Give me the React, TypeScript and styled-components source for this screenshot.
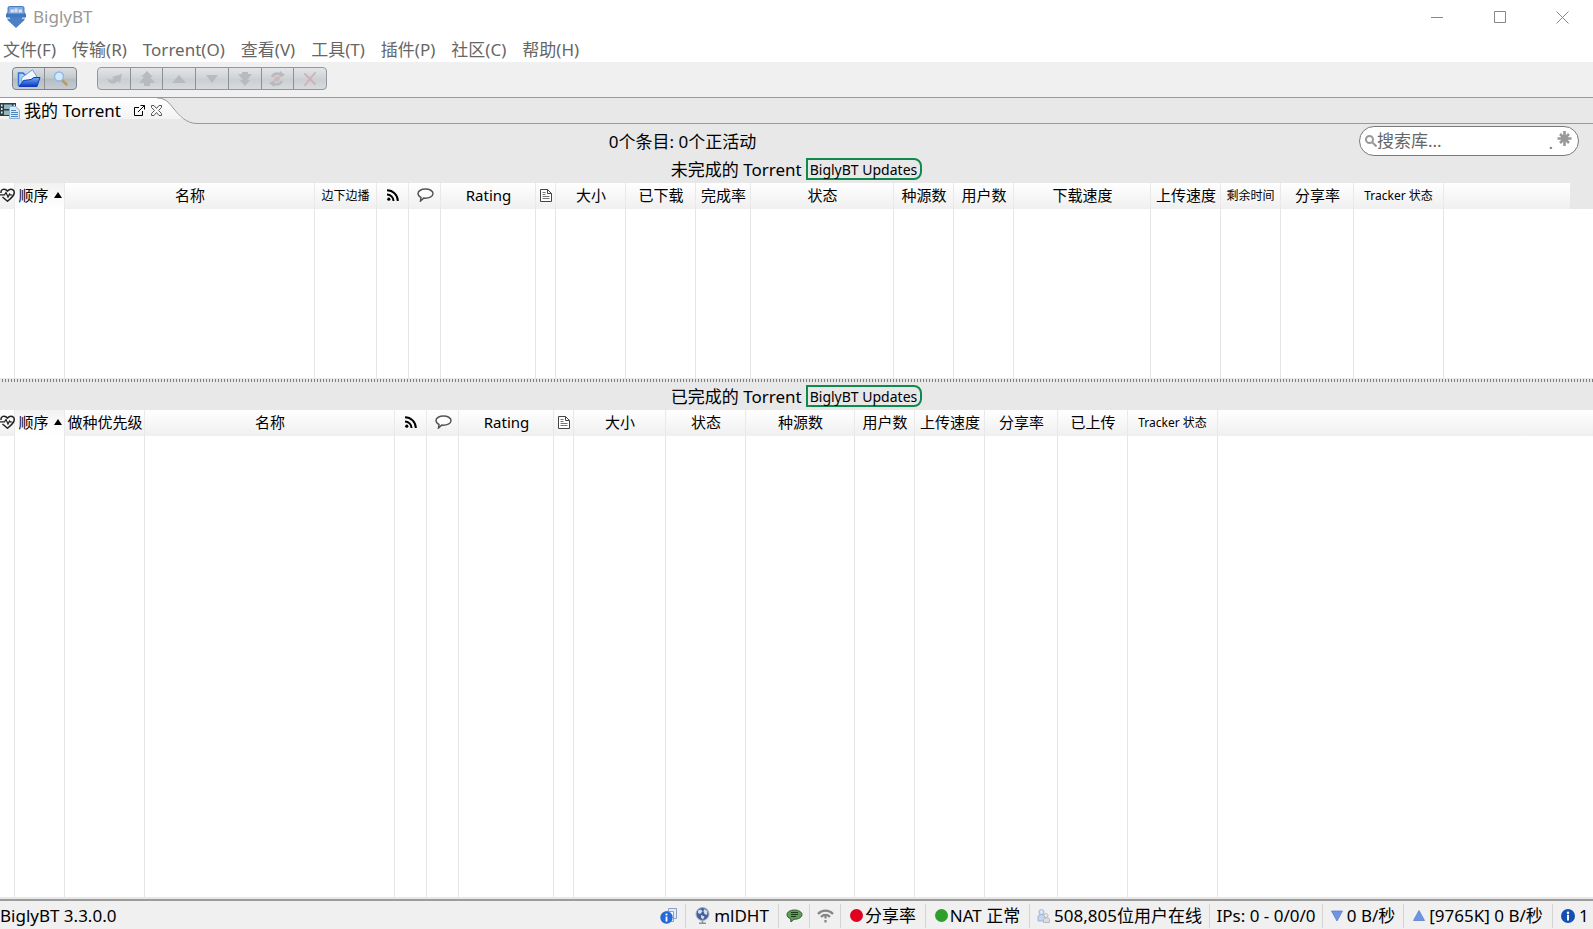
import React from "react";
import styled, { createGlobalStyle, css } from "styled-components";

const GlobalStyle = createGlobalStyle`
  *, *::before, *::after { box-sizing: border-box; }
  body {
    margin: 0;
    background: #fff;
    color: #000;
    font-family: "Noto Sans", "Noto Sans CJK SC", sans-serif;
    font-size: 17px;
    line-height: 24px;
  }
  button, input { font: inherit; color: inherit; }
  svg { display: block; flex: none; }
`;

const Window = styled.div`
  display: flex;
  flex-direction: column;
  min-height: 100vh;
  min-width: 0;
  overflow: hidden;
`;

/* ---------- title bar ---------- */

const TitleBar = styled.header`
  display: flex;
  align-items: center;
  height: 34px;
  padding-left: 6px;
  gap: 7px;
  color: #999;
`;

const AppName = styled.h1`
  flex: 1;
  margin: 0;
  font-size: 17px;
  font-weight: 400;
`;

const WindowButtons = styled.div`
  display: flex;
`;

const PlainButton = styled.button`
  display: flex;
  align-items: center;
  justify-content: center;
  padding: 0;
  border: 0;
  background: none;
`;

const WindowButton = styled(PlainButton)`
  width: 63px;
  height: 34px;
  color: #888;

  &:last-child {
    width: 61px;
  }
`;

/* ---------- menu and tool bar ---------- */

const MenuBar = styled.nav`
  display: flex;
  align-items: center;
  gap: 16px;
  height: 28px;
  padding: 3px 0 0 3px;
  color: #666;
`;

const MenuItem = styled(PlainButton)`
  white-space: nowrap;
`;

const ToolBar = styled.div`
  display: flex;
  align-items: center;
  gap: 20px;
  height: 35px;
  padding: 0 12px 2px;
  background: #f0f0f0;
`;

const ToolGroup = styled.div<{ $muted?: boolean }>`
  display: flex;
  width: ${(p) => (p.$muted ? 230 : 65)}px;
  height: 23px;
  border: 1px solid ${(p) => (p.$muted ? "#94989d" : "#7d8288")};
  border-radius: 4px;
  background: ${(p) =>
    p.$muted
      ? "linear-gradient(#e2e4e6, #d2d5d8 45%, #cbced2 55%, #d8dbde)"
      : "linear-gradient(#dbdee2, #c4cace 45%, #b5bdc3 55%, #c6ccd1)"};
`;

const ToolButton = styled(PlainButton)`
  flex: 1;

  & + & {
    border-left: 1px solid #8b9095;
  }
`;

/* ---------- tab strip ---------- */

const TabStrip = styled.div`
  display: flex;
  height: 27px;
  border-top: 1px solid #999;
  background: #e8e8e8;
`;

const Tab = styled.div`
  display: flex;
  align-items: center;
  flex: none;
  z-index: 1;
  width: 157px;
  height: 21px;
  padding-top: 4px;
  background: linear-gradient(#fff, #f3f3f3);
`;

const TabLabel = styled(PlainButton)`
  flex: none;
  gap: 4px;
  margin-right: 13px;
  white-space: nowrap;
`;

const TabAction = styled(PlainButton)`
  flex: none;
  width: 11px;
  height: 11px;

  & + & {
    margin-left: 6px;
    color: #555;
  }
`;

const TabRest = styled.div`
  flex: 1;
  border-bottom: 1px solid #999;
`;

/* ---------- library header ---------- */

const Summary = styled.div`
  display: flex;
  align-items: center;
  height: 33px;
  padding: 0 14px 0 6px;
  background: #e8e8e8;
`;

const SummaryText = styled.p`
  flex: 1;
  margin: 0;
  padding-top: 2px;
  text-align: center;
`;

const SearchBox = styled.label`
  display: flex;
  align-items: center;
  width: 220px;
  height: 30px;
  padding: 0 6px 0 5px;
  border: 1px solid #7a7a7a;
  border-radius: 15px;
  background: #fff;
  color: #999;
`;

const SearchInput = styled.input`
  flex: 1;
  min-width: 0;
  padding: 0;
  border: 0;
  outline: 0;
  background: none;

  &::placeholder {
    color: #666;
    opacity: 1;
  }
`;

const SearchDot = styled.span`
  padding: 4px 4px 0 0;
  color: #777;
`;

const SectionTitle = styled.div<{ $tall?: boolean }>`
  display: flex;
  align-items: center;
  justify-content: center;
  gap: 4px;
  height: ${(p) => (p.$tall ? 28 : 26)}px;
  padding-top: ${(p) => (p.$tall ? 2 : 0)}px;
  background: #e8e8e8;
`;

const SectionName = styled.h2`
  margin: 0;
  font-size: 17px;
  font-weight: 400;
`;

const TagButton = styled.button`
  height: 22px;
  margin-bottom: 2px;
  padding: 2px 3px 0 2px;
  border: 2px solid #0f8a4c;
  border-radius: 0 8px 8px 0;
  background: none;
  font-size: 14px;
  line-height: 16px;
  white-space: nowrap;
`;

/* ---------- tables ---------- */

const TableArea = styled.div<{ $grow?: boolean }>`
  display: grid;
  ${(p) =>
    p.$grow
      ? css`
          flex: 1;
        `
      : css`
          height: 195px;
        `}
`;

const Table = styled.table`
  width: 100%;
  height: 100%;
  table-layout: fixed;
  border-collapse: separate;
  border-spacing: 0;
`;

const Head = styled.th<{ $small?: boolean; $sorted?: boolean; $blank?: boolean; $end?: boolean }>`
  height: 26px;
  padding: 0;
  border-right: ${(p) => (p.$blank ? 0 : 1)}px solid #e9e9e9;
  background: ${(p) =>
    p.$end ? "#e8e8e8" : p.$sorted ? "linear-gradient(#f2f2f2, #fff)" : "linear-gradient(#fff, #efefef)"};
  font-size: ${(p) => (p.$small ? 12 : 15)}px;
  line-height: 24px;
  font-weight: 400;
  white-space: nowrap;
`;

const HeadContent = styled.div<{ $small?: boolean }>`
  display: flex;
  align-items: center;
  justify-content: center;
  gap: 5px;
  height: 26px;
  padding: ${(p) => (p.$small ? "0" : "0 0 2px 1px")};
`;

const Cell = styled.td<{ $blank?: boolean }>`
  padding: 0;
  border-right: ${(p) => (p.$blank ? 0 : 1)}px solid #e5e5e5;
`;

const Splitter = styled.div`
  height: 4px;
  border-top: 1px solid #e8e8e8;
  background: repeating-linear-gradient(90deg, #e8e8e8 0 2px, #808080 2px 3px);
`;

/* ---------- status bar ---------- */

const StatusBar = styled.footer`
  display: flex;
  align-items: center;
  height: 32px;
  padding-top: 3px;
  border-top: 2px solid #e8e8e8;
  background: #f0f0f0;
  box-shadow: inset 0 2px #9c9c9c;
  white-space: nowrap;
`;

const Version = styled.span`
  flex: 1;
`;

const StatusItem = styled.div<{ $width: number; $gap?: number; $start?: boolean }>`
  display: flex;
  align-items: center;
  justify-content: ${(p) => (p.$start ? "flex-start" : "center")};
  gap: ${(p) => p.$gap ?? 2}px;
  width: ${(p) => p.$width}px;
  height: 24px;
  padding-left: ${(p) => (p.$start ? 7 : 0)}px;
  border-right: ${(p) => (p.$start ? 0 : 1)}px solid #d4d4d4;
`;

const Dot = styled.span<{ $color: string }>`
  flex: none;
  width: 13px;
  height: 13px;
  border-radius: 50%;
  background: ${(p) => p.$color};
`;

/* ---------- icons ---------- */

const AppLogo = () => (
  <svg width="20" height="22" viewBox="0 0 20 22" aria-hidden="true">
    <path d="M3 0h14l1.500 1.500V6l1 1.500-1 3V14L10 22l-8.500-8v-3.500l-1-3 1-1.500V1.500z" fill="#4a80c4" />
    <path d="M3 1h14l.8 6.500H2.200z" fill="#86a9db" />
    <path d="M0 8h20v3.500H0z" fill="#4179c0" />
    <path d="M4.500 3.500H8v3H4.500zM8.500 2.500h3v4h-3zM12.500 3.500H16v3h-3.500z" fill="#d5e2f3" />
    <path d="M1.500 11.500h2.500V13H1.500zM16 11.500h2.500V13H16z" fill="#c3d5ee" />
  </svg>
);

const FolderIcon = () => (
  <svg width="24" height="19" viewBox="0 0 24 19" aria-hidden="true">
    <defs>
      <linearGradient id="folder" x1="0" y1="0" x2="0" y2="1">
        <stop offset="0" stopColor="#6fb0f6" />
        <stop offset="1" stopColor="#0c35bd" />
      </linearGradient>
    </defs>
    <path d="M1.500 17V4H6L8 6h4" fill="#a9cef7" stroke="#2b74da" strokeWidth="1.500" />
    <path d="M5 8.500L15.500.8 19.500 7l-1 5H4z" fill="#f2f6fc" stroke="#6d9ee0" />
    <path d="M2 17.500L6.500 11.500 14 10.500l3-2h6L20 17.500z" fill="url(#folder)" stroke="#0b3cc0" />
  </svg>
);

const MagnifierIcon = () => (
  <svg width="15" height="15" viewBox="0 0 15 15" aria-hidden="true">
    <path d="M9 9l4.500 4.500" stroke="#c19a4e" strokeWidth="2.500" strokeLinecap="round" />
    <circle cx="6" cy="5.500" r="4.500" fill="#d3e9fc" stroke="#8db9e8" strokeWidth="1.500" />
  </svg>
);

const DISABLED = "#b7bbbe";

const ToolGlyph = ({ d }: { d: string }) => (
  <svg width="18" height="16" viewBox="0 0 18 16" aria-hidden="true">
    <path d={d} fill={DISABLED} />
  </svg>
);

const RecheckGlyph = () => (
  <svg width="18" height="16" viewBox="0 0 18 16" fill="none" stroke={DISABLED} strokeWidth="2.500" aria-hidden="true">
    <path d="M4 6q2-4.500 8-3M14 10q-2 4.500-8 3" />
    <path d="M12 0l5 4-6 3zM6 16l-5-4 6-3z" fill={DISABLED} stroke="none" />
    <circle cx="9" cy="8" r="2.800" fill="#d3b6b8" stroke="none" />
  </svg>
);

const RemoveGlyph = () => (
  <svg width="14" height="14" viewBox="0 0 14 14" aria-hidden="true">
    <path d="M2 2l10 10M12 1L2 13" stroke="#cdb2b4" strokeWidth="1.800" strokeLinecap="round" />
  </svg>
);

const LibraryIcon = () => (
  <svg width="20" height="17" viewBox="0 0 20 17" aria-hidden="true">
    <path d="M0 1h16v13H0z" fill="#2f3d42" />
    <path d="M4 2.500h8v4.500H4zM4 8.500h8V13H4z" fill="#8fb7bd" />
    <path d="M1 2.500h1.500v2H1zM1 6h1.500v2H1zM1 9.500h1.500v2H1zM13.500 2.500H15v2h-1.500z" fill="#e6eef0" />
    <path d="M9.500 4.500h6l4 3.500v8.500h-10z" fill="#d9ebfb" stroke="#86b3dc" />
    <path d="M11 8.500h5M11 10.500h7M11 12.500h7M11 14.500h7" stroke="#4f86bd" />
  </svg>
);

const PopOutIcon = () => (
  <svg width="11" height="11" viewBox="0 0 11 11" fill="none" stroke="#000" aria-hidden="true">
    <path d="M5 2.500H.5v8h8V6M6.500.5h4v4M10.500.5L4 7" />
  </svg>
);

const CloseTabIcon = () => (
  <svg width="11" height="11" viewBox="0 0 11 11" fill="none" stroke="currentColor" aria-hidden="true">
    <path d="M.5.5h2.500l2.500 3 2.500-3h2.500v2L7.500 5.500l3 3v2H8l-2.500-3-2.500 3H.5v-2l3-3-3-3z" />
  </svg>
);

const TabCurve = () => (
  <svg width="40" height="26" viewBox="0 0 40 26" aria-hidden="true">
    <defs>
      <linearGradient id="tabFade" x1="0" y1="0" x2="0" y2="1">
        <stop offset="0" stopColor="#fff" />
        <stop offset="1" stopColor="#f3f3f3" />
      </linearGradient>
    </defs>
    <path d="M0 0C9 0 12 5 17 11l11 10H0z" fill="url(#tabFade)" />
    <path d="M0 0C9 0 12 5 17 11S29 25.500 40 25.500" fill="none" stroke="#999" />
  </svg>
);

const SearchIcon = () => (
  <svg width="12" height="12" viewBox="0 0 12 12" fill="none" stroke="#999" strokeWidth="2" aria-hidden="true">
    <circle cx="4.500" cy="4.500" r="3.500" />
    <path d="M7.500 7.500l4 4" />
  </svg>
);

const Asterisk = styled.svg`
  margin-bottom: 4px;
`;

const AsteriskIcon = () => (
  <Asterisk width="15" height="15" viewBox="0 0 15 15" stroke="#999" strokeWidth="2.600" aria-hidden="true">
    <path d="M7.500 0v15M.5 7.500h14M3 3l9 9M12 3l-9 9" />
  </Asterisk>
);

const HealthIcon = () => (
  <svg width="15" height="14" viewBox="0 0 15 14" fill="none" stroke="#222" strokeWidth="1.500" aria-hidden="true">
    <path d="M2.500 9l5 4.200c2.500-2 6-4.700 6.600-7.700C15 1.500 10.500-.5 7.500 3 4.500-.5.500 1.500 1 5" />
    <path d="M0 6.800h4.500L6 4.500l2 4.500 1.500-3 1 1h2" strokeWidth="1.200" />
  </svg>
);

const SortIcon = () => (
  <svg width="8" height="6" viewBox="0 0 8 6" aria-hidden="true">
    <path d="M4 0l4 6H0z" fill="#000" />
  </svg>
);

const RssIcon = () => (
  <svg width="12" height="12" viewBox="0 0 12 12" fill="none" stroke="#000" strokeWidth="2" aria-hidden="true">
    <circle cx="1.800" cy="10.200" r="1.600" fill="#000" stroke="none" />
    <path d="M0 5.500A6.500 6.500 0 0 1 6.500 12M0 1.200A10.800 10.800 0 0 1 10.800 12" />
  </svg>
);

const CommentIcon = () => (
  <svg width="17" height="14" viewBox="0 0 17 14" aria-hidden="true">
    <path
      d="M8.500 1C4.500 1 1 2.800 1 5.500c0 1.800 1.200 3 3 3.900L3.500 13l3.200-2.900C12 10.600 16 8.500 16 5.500 16 2.800 12.500 1 8.500 1z"
      fill="#fff"
      stroke="#555"
      strokeWidth="1.500"
    />
  </svg>
);

const DocumentIcon = () => (
  <svg width="12" height="13" viewBox="0 0 12 13" fill="#fff" stroke="#444" aria-hidden="true">
    <path d="M.5.5h7l4 4v8H.5zM7.500.5v4h4" />
    <path d="M2.500 3.500h3M2.500 5.500h3M2.500 7.500h7M2.500 9.500h7" stroke="#777" />
  </svg>
);

const InfoGlyph = ({ cx, cy, fill }: { cx: number; cy: number; fill: string }) => (
  <g transform={`translate(${cx} ${cy})`}>
    <circle r="7" fill={fill} />
    <circle cy="-3.200" r="1.200" fill="#fff" />
    <path d="M0-1.200V4.500" stroke="#fff" strokeWidth="2" />
  </g>
);

const InfoCopyIcon = () => (
  <svg width="17" height="16" viewBox="0 0 17 16" aria-hidden="true">
    <path d="M8.500.5h8v10h-8z" fill="#e4ebf7" stroke="#8ca0c6" />
    <path d="M5.500 3.500h8v10h-8z" fill="#f1f5fb" stroke="#8ca0c6" />
    <circle cx="6.500" cy="9.500" r="6.200" fill="#2469d8" />
    <circle cx="6.500" cy="6.500" r="1.100" fill="#fff" />
    <path d="M6.500 8.500V13.500" stroke="#fff" strokeWidth="1.800" />
  </svg>
);

const InfoIcon = () => (
  <svg width="16" height="16" viewBox="0 0 16 16" aria-hidden="true">
    <InfoGlyph cx={8} cy={8} fill="#1450b4" />
  </svg>
);

const GlobeIcon = () => (
  <svg width="15" height="17" viewBox="0 0 15 17" aria-hidden="true">
    <path d="M4 16.200h7M7.500 13v3" stroke="#8b8f98" strokeWidth="1.500" />
    <circle cx="7.500" cy="7" r="6.500" fill="#42629f" stroke="#a9b2c2" />
    <path d="M3 3.500l3-1 1.500 2L5 7 3 6zM9 2l3.500 2-.5 4-2.500-1-1-2.500zM6 8l3.500 1.500L8 12.500l-2-2z" fill="#d5deed" />
  </svg>
);

const ChatIcon = () => (
  <svg width="17" height="14" viewBox="0 0 17 14" aria-hidden="true">
    <path d="M8.500 1C4.300 1 1 2.900 1 5.700c0 1.800 1.400 3.300 3.600 4.100L5 13l3-2.700c4.500 0 8-1.900 8-4.600S12.700 1 8.500 1z" fill="#5d9c56" stroke="#3a5a36" />
    <path d="M5 3.500h7M5 5.500h7M5 7.500h5" stroke="#1c3a1a" />
  </svg>
);

const WifiIcon = () => (
  <svg width="17" height="14" viewBox="0 0 17 14" fill="none" stroke="#858585" strokeWidth="2.200" aria-hidden="true">
    <path d="M1 5a10 10 0 0 1 15 0M4 8a6 6 0 0 1 9 0" />
    <path d="M8.500 6.500v3M8.500 11v2.500" />
  </svg>
);

const UsersIcon = () => (
  <svg width="13" height="14" viewBox="0 0 13 14" stroke="#9eb4d6" aria-hidden="true">
    <circle cx="4.500" cy="3" r="2.500" fill="#d9e6f7" />
    <path d="M1 12V7.500Q1 5.500 4.500 5.500T8 7.500V12z" fill="#c4d6ef" />
    <circle cx="9" cy="6.500" r="2" fill="#ececec" stroke="#b4b8c0" />
    <path d="M6.500 13.500V10.500Q6.500 8.800 9.500 8.800T12.500 10.500v3z" fill="#dedede" stroke="#b4b8c0" />
  </svg>
);

const SpeedArrow = ({ up }: { up?: boolean }) => (
  <svg width="12" height="12" viewBox="0 0 12 12" aria-hidden="true">
    <path d={up ? "M6 .5l5.500 10H.5z" : "M6 11L.5 1h11z"} fill="#6f95e0" stroke="#5a80cf" strokeWidth=".8" />
  </svg>
);

/* ---------- data ---------- */

type Column = { w: number; label?: string; icon?: React.ReactNode; name?: string; small?: boolean; sorted?: boolean };

const health: Column = { w: 15, icon: <HealthIcon />, name: "健康度" };
const order: Column = { w: 50, label: "顺序", sorted: true };
const name: Column = { w: 250, label: "名称" };
const rss: Column = { w: 32, icon: <RssIcon />, name: "RSS" };
const comment: Column = { w: 32, icon: <CommentIcon />, name: "评论" };
const rating: Column = { w: 95, label: "Rating" };
const info: Column = { w: 20, icon: <DocumentIcon />, name: "信息" };
const tracker: Column = { w: 90, label: "Tracker 状态", small: true };

const incompleteColumns: Column[] = [
  health,
  order,
  name,
  { w: 62, label: "边下边播", small: true },
  rss,
  comment,
  rating,
  info,
  { w: 70, label: "大小" },
  { w: 70, label: "已下载" },
  { w: 55, label: "完成率" },
  { w: 143, label: "状态" },
  { w: 60, label: "种源数" },
  { w: 60, label: "用户数" },
  { w: 137, label: "下载速度" },
  { w: 70, label: "上传速度" },
  { w: 60, label: "剩余时间", small: true },
  { w: 73, label: "分享率" },
  tracker,
];

const completeColumns: Column[] = [
  health,
  order,
  { w: 80, label: "做种优先级" },
  name,
  rss,
  comment,
  rating,
  info,
  { w: 92, label: "大小" },
  { w: 80, label: "状态" },
  { w: 109, label: "种源数" },
  { w: 60, label: "用户数" },
  { w: 70, label: "上传速度" },
  { w: 73, label: "分享率" },
  { w: 70, label: "已上传" },
  tracker,
];

const menus = ["文件(F)", "传输(R)", "Torrent(O)", "查看(V)", "工具(T)", "插件(P)", "社区(C)", "帮助(H)"];

const queueTools: { name: string; icon: React.ReactNode }[] = [
  { name: "运行", icon: <ToolGlyph d="M1 7q3 3 8 1l-2-2 10-3-2 9-2-2Q8 15 4 11z" /> },
  { name: "移到顶部", icon: <ToolGlyph d="M9 0l6 6h-3l5 6h-5v3H6v-3H1l5-6H3z" /> },
  { name: "上移", icon: <ToolGlyph d="M9 4l7 8H2z" /> },
  { name: "下移", icon: <ToolGlyph d="M9 12L3 4h12z" /> },
  { name: "移到底部", icon: <ToolGlyph d="M9 15L4 9h3L2 3h4V1h6v2h4l-5 6h3z" /> },
  { name: "重新检查", icon: <RecheckGlyph /> },
  { name: "移除", icon: <RemoveGlyph /> },
];

function TorrentTable({ columns, grow, endGap, label }: { columns: Column[]; grow?: boolean; endGap?: boolean; label: string }) {
  return (
    <TableArea $grow={grow}>
      <Table aria-label={label}>
        <colgroup>
          {columns.map((c, i) => (
            <col key={i} width={c.w} />
          ))}
          <col />
          {endGap && <col width={23} />}
        </colgroup>
        <thead>
          <tr>
            {columns.map((c, i) => (
              <Head key={i} scope="col" $small={c.small} $sorted={c.sorted} aria-label={c.name}>
                <HeadContent $small={c.small}>
                  {c.icon ?? c.label}
                  {c.sorted && <SortIcon />}
                </HeadContent>
              </Head>
            ))}
            <Head as="td" $blank />
            {endGap && <Head as="td" $blank $end />}
          </tr>
        </thead>
        <tbody>
          <tr>
            {columns.map((_, i) => (
              <Cell key={i} />
            ))}
            <Cell $blank colSpan={endGap ? 2 : 1} />
          </tr>
        </tbody>
      </Table>
    </TableArea>
  );
}

export default function App() {
  return (
    <>
      <GlobalStyle />
      <Window>
        <TitleBar>
          <AppLogo />
          <AppName>BiglyBT</AppName>
          <WindowButtons>
            <WindowButton aria-label="最小化">
              <svg width="13" height="13" stroke="currentColor"><path d="M0 6.500h12" /></svg>
            </WindowButton>
            <WindowButton aria-label="最大化">
              <svg width="13" height="13" stroke="currentColor" fill="none"><path d="M.5.500h11v11H.5z" /></svg>
            </WindowButton>
            <WindowButton aria-label="关闭">
              <svg width="13" height="13" stroke="currentColor"><path d="M.5.500l12 12M12.500.500l-12 12" /></svg>
            </WindowButton>
          </WindowButtons>
        </TitleBar>

        <MenuBar>
          {menus.map((m) => (
            <MenuItem key={m}>{m}</MenuItem>
          ))}
        </MenuBar>

        <ToolBar>
          <ToolGroup>
            <ToolButton aria-label="打开"><FolderIcon /></ToolButton>
            <ToolButton aria-label="搜索"><MagnifierIcon /></ToolButton>
          </ToolGroup>
          <ToolGroup $muted>
            {queueTools.map((t) => (
              <ToolButton key={t.name} disabled aria-label={t.name}>{t.icon}</ToolButton>
            ))}
          </ToolGroup>
        </ToolBar>

        <TabStrip>
          <Tab>
            <TabLabel><LibraryIcon />我的 Torrent</TabLabel>
            <TabAction aria-label="弹出"><PopOutIcon /></TabAction>
            <TabAction aria-label="关闭标签"><CloseTabIcon /></TabAction>
          </Tab>
          <TabCurve />
          <TabRest />
        </TabStrip>

        <Summary>
          <SummaryText>0个条目: 0个正活动</SummaryText>
          <SearchBox>
            <SearchIcon />
            <SearchInput type="text" placeholder="搜索库..." aria-label="搜索库" />
            <SearchDot>.</SearchDot>
            <AsteriskIcon />
          </SearchBox>
        </Summary>

        <SectionTitle>
          <SectionName>未完成的 Torrent</SectionName>
          <TagButton>BiglyBT Updates</TagButton>
        </SectionTitle>
        <TorrentTable columns={incompleteColumns} endGap label="未完成的 Torrent" />

        <Splitter />

        <SectionTitle $tall>
          <SectionName>已完成的 Torrent</SectionName>
          <TagButton>BiglyBT Updates</TagButton>
        </SectionTitle>
        <TorrentTable columns={completeColumns} grow label="已完成的 Torrent" />

        <StatusBar>
          <Version>BiglyBT 3.3.0.0</Version>
          <StatusItem $width={34}><InfoCopyIcon /></StatusItem>
          <StatusItem $width={93} $gap={4}><GlobeIcon />mlDHT</StatusItem>
          <StatusItem $width={31}><ChatIcon /></StatusItem>
          <StatusItem $width={31}><WifiIcon /></StatusItem>
          <StatusItem $width={85}><Dot $color="#e2001f" />分享率</StatusItem>
          <StatusItem $width={104}><Dot $color="#2f9e2a" />NAT 正常</StatusItem>
          <StatusItem $width={180} $gap={4}><UsersIcon />508,805位用户在线</StatusItem>
          <StatusItem $width={113}>IPs: 0 - 0/0/0</StatusItem>
          <StatusItem $width={81} $gap={4}><SpeedArrow />0 B/秒</StatusItem>
          <StatusItem $width={149} $gap={4}><SpeedArrow up />[9765K] 0 B/秒</StatusItem>
          <StatusItem $width={40} $gap={3} $start><InfoIcon />1</StatusItem>
        </StatusBar>
      </Window>
    </>
  );
}
